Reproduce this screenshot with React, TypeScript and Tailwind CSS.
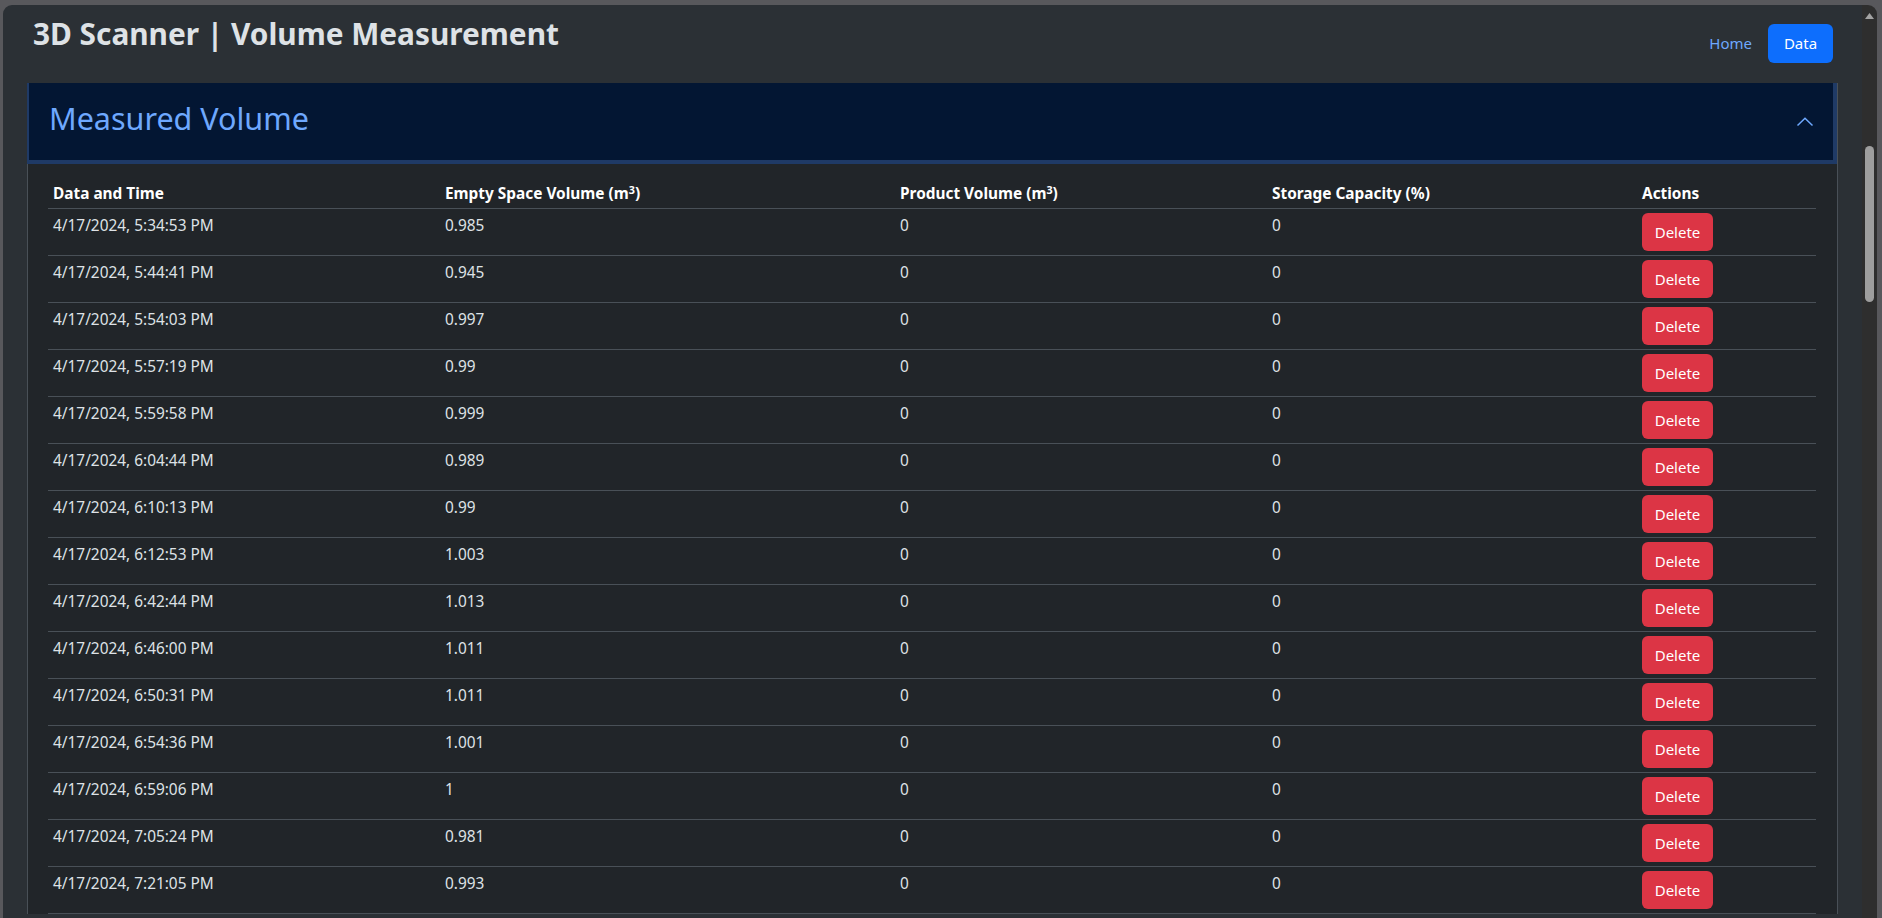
import { Fragment } from "react";

const rows = [
  ["4/17/2024, 5:34:53 PM", "0.985"],
  ["4/17/2024, 5:44:41 PM", "0.945"],
  ["4/17/2024, 5:54:03 PM", "0.997"],
  ["4/17/2024, 5:57:19 PM", "0.99"],
  ["4/17/2024, 5:59:58 PM", "0.999"],
  ["4/17/2024, 6:04:44 PM", "0.989"],
  ["4/17/2024, 6:10:13 PM", "0.99"],
  ["4/17/2024, 6:12:53 PM", "1.003"],
  ["4/17/2024, 6:42:44 PM", "1.013"],
  ["4/17/2024, 6:46:00 PM", "1.011"],
  ["4/17/2024, 6:50:31 PM", "1.011"],
  ["4/17/2024, 6:54:36 PM", "1.001"],
  ["4/17/2024, 6:59:06 PM", "1"],
  ["4/17/2024, 7:05:24 PM", "0.981"],
  ["4/17/2024, 7:21:05 PM", "0.993"],
];

function M3() {
  return (
    <Fragment>
      (m<sup className="text-[0.7em]">3</sup>)
    </Fragment>
  );
}

export default function App() {
  return (
    <div className="h-[918px] w-[1882px] overflow-hidden bg-[#58585c] pl-[3px] pr-[5px] pt-[5px] font-['Noto_Sans',sans-serif]">
      <div className="flex h-[930px] overflow-hidden rounded-t-[9px]">
        {/* page */}
        <main className="flex-1 bg-[#2b3035] pl-[24px] pr-[24px] pt-[10px]">
          <header className="flex h-[68px] items-start justify-between">
            <h2 className="pl-[6px] text-[29.8px] font-bold leading-[37px] text-[#dee2e6]">
              3D Scanner | Volume Measurement
            </h2>
            <nav className="mt-[9px] mr-[5px] flex items-center gap-[8px]">
              <a className="px-[8px] text-[15px] text-[#6ea8fe]" href="#">
                Home
              </a>
              <a
                className="flex h-[39px] w-[65px] items-center justify-center rounded-[6px] bg-[#0d6efd] text-[15px] text-white"
                href="#"
              >
                Data
              </a>
            </nav>
          </header>

          <section className="border-x border-[#495057] bg-[#212529]">
            <div className="-ml-px flex h-[81px] items-start justify-between border-b-4 border-l-[2px] border-r-4 border-[#1f3a66] bg-[#031633] pl-[20px] pr-[18px] pt-[17px]">
              <span className="text-[30.5px] leading-[37px] text-[#6ea8fe]">Measured Volume</span>
              <svg width="20" height="20" viewBox="0 0 20 20" className="mt-[12px]" fill="none">
                <path d="M2.5 13.5L10 6.25L17.5 13.5" stroke="#6ea8fe" strokeWidth="1.5" />
              </svg>
            </div>

            <div className="px-5 pt-[10px]">
              <table className="w-[1768px] table-fixed border-collapse text-left text-[15.4px] text-[#dee2e6]">
                <colgroup>
                  <col className="w-[392px]" />
                  <col className="w-[455px]" />
                  <col className="w-[372px]" />
                  <col className="w-[371px]" />
                  <col className="w-[178px]" />
                </colgroup>
                <thead>
                  <tr className="border-b border-[#495057] font-bold text-white">
                    <th className="pb-[2px] pt-[8px] pl-[5px] pr-1 align-top leading-[24px]">Data and Time</th>
                    <th className="pb-[2px] pt-[8px] pl-[5px] pr-1 align-top leading-[24px]">
                      Empty Space Volume <M3 />
                    </th>
                    <th className="pb-[2px] pt-[8px] pl-[5px] pr-1 align-top leading-[24px]">
                      Product Volume <M3 />
                    </th>
                    <th className="pb-[2px] pt-[8px] pl-[5px] pr-1 align-top leading-[24px]">Storage Capacity (%)</th>
                    <th className="pb-[2px] pt-[8px] pl-1 pr-1 align-top leading-[24px]">Actions</th>
                  </tr>
                </thead>
                <tbody>
                  {rows.map(([time, empty]) => (
                    <tr key={time} className="border-b border-[#495057]">
                      <td className="pb-1 pt-[5px] pl-[5px] pr-1 align-top leading-[24px]">{time}</td>
                      <td className="pb-1 pt-[5px] pl-[5px] pr-1 align-top leading-[24px]">{empty}</td>
                      <td className="pb-1 pt-[5px] pl-[5px] pr-1 align-top leading-[24px]">0</td>
                      <td className="pb-1 pt-[5px] pl-[5px] pr-1 align-top leading-[24px]">0</td>
                      <td className="px-1 py-1 align-top leading-[24px]">
                        <button className="flex h-[38px] w-[71px] items-center justify-center rounded-[6px] bg-[#dc3545] text-[15px] text-white">
                          Delete
                        </button>
                      </td>
                    </tr>
                  ))}
                </tbody>
              </table>
            </div>
          </section>
        </main>

        {/* window scrollbar */}
        <div className="flex w-[15px] flex-col items-center bg-[#2e2e2e]">
          <svg width="9" height="6" viewBox="0 0 9 6" className="mt-[8px]">
            <path d="M4.5 0L9 6H0Z" fill="#a3a3a3" />
          </svg>
          <div className="mt-[127px] h-[156px] w-[9px] rounded-full bg-[#9e9e9e]" />
        </div>
      </div>
    </div>
  );
}
